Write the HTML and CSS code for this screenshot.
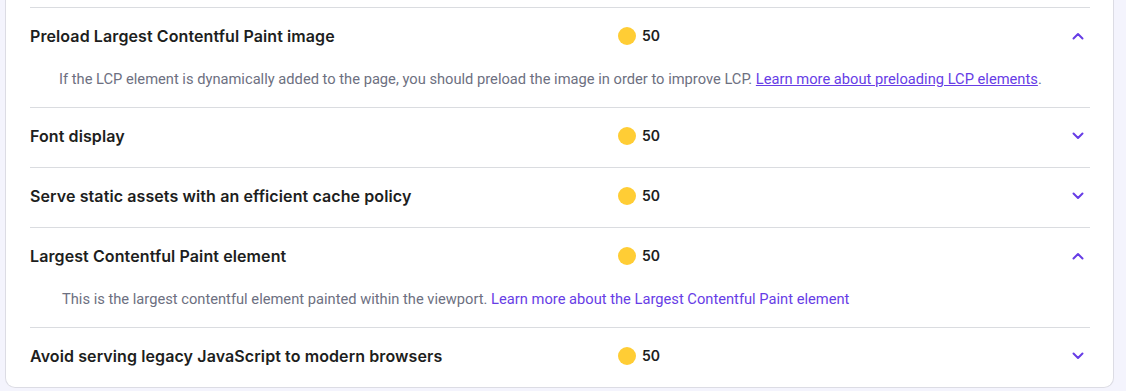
FILE: index.html
```html
<!DOCTYPE html>
<html lang="en">
<head>
  <meta charset="UTF-8">
  <meta name="viewport" content="width=device-width, initial-scale=1.0">
  <link rel="stylesheet" href="styles.css">
  <title>Audits</title>
</head>
<body>
<div class="card">
  <div class="audit-list">

    <div class="audit open">
      <div class="audit-head">
        <span class="audit-title">Preload Largest Contentful Paint image</span>
        <span class="score"><span class="dot"></span>50</span>
        <svg class="chevron" viewBox="0 0 12 8"><path d="M1.5 6.5 L6 2 L10.5 6.5"/></svg>
      </div>
      <p class="audit-desc">If the LCP element is dynamically added to the page, you should preload the image in order to improve LCP. <a href="#" class="underlined">Learn more about preloading LCP elements</a>.</p>
    </div>

    <div class="audit">
      <div class="audit-head">
        <span class="audit-title">Font display</span>
        <span class="score"><span class="dot"></span>50</span>
        <svg class="chevron" viewBox="0 0 12 8"><path d="M1.5 1.5 L6 6 L10.5 1.5"/></svg>
      </div>
    </div>

    <div class="audit">
      <div class="audit-head">
        <span class="audit-title">Serve static assets with an efficient cache policy</span>
        <span class="score"><span class="dot"></span>50</span>
        <svg class="chevron" viewBox="0 0 12 8"><path d="M1.5 1.5 L6 6 L10.5 1.5"/></svg>
      </div>
    </div>

    <div class="audit open">
      <div class="audit-head">
        <span class="audit-title">Largest Contentful Paint element</span>
        <span class="score"><span class="dot"></span>50</span>
        <svg class="chevron" viewBox="0 0 12 8"><path d="M1.5 6.5 L6 2 L10.5 6.5"/></svg>
      </div>
      <p class="audit-desc indent">This is the largest contentful element painted within the viewport. <a href="#">Learn more about the Largest Contentful Paint element</a></p>
    </div>

    <div class="audit">
      <div class="audit-head">
        <span class="audit-title">Avoid serving legacy JavaScript to modern browsers</span>
        <span class="score"><span class="dot"></span>50</span>
        <svg class="chevron" viewBox="0 0 12 8"><path d="M1.5 1.5 L6 6 L10.5 1.5"/></svg>
      </div>
    </div>

  </div>
</div>
</body>
</html>
```

FILE: styles.css
```css
body {
  margin: 0;
  padding: 0;
  background: #f4f4fd;
  font-family: "Inter", "DejaVu Sans", sans-serif;
  color: #1d1e20;
}

.card {
  margin: 0 12px 0 5px;
  padding-top: 7px;
  height: 388px;
  box-sizing: border-box;
  background: #fff;
  border: 1px solid #dcdce4;
  border-top: none;
  border-radius: 0 0 10px 10px;
}

.audit-list {
  margin: 0 23px 0 24px;
}

.audit {
  border-top: 1px solid #dadce0;
}

.audit-head {
  display: grid;
  grid-template-columns: 588px 1fr auto;
  align-items: center;
  height: 55px;
  padding-bottom: 4px;
}

.audit-title {
  font-size: 16px;
  font-weight: 600;
  letter-spacing: 0.1px;
}

.score {
  display: flex;
  align-items: center;
  font-size: 14px;
  font-weight: 600;
}

.dot {
  width: 18px;
  height: 18px;
  border-radius: 50%;
  background: #ffcd35;
  margin-right: 6px;
}

.chevron {
  width: 12px;
  height: 8px;
  margin-right: 6px;
  fill: none;
  stroke: #673de6;
  stroke-width: 2;
  stroke-linecap: round;
  stroke-linejoin: round;
}

.audit-desc {
  margin: 0;
  height: 38px;
  padding: 2px 0 0 29px;
  font-family: "Roboto", sans-serif;
  font-size: 14.7px;
  color: #6d7081;
  line-height: 20px;
}

.audit-desc.indent {
  padding-left: 32px;
}

.audit-desc a {
  color: #673de6;
  text-decoration: none;
}

.audit-desc a.underlined {
  text-decoration: underline;
}
```
